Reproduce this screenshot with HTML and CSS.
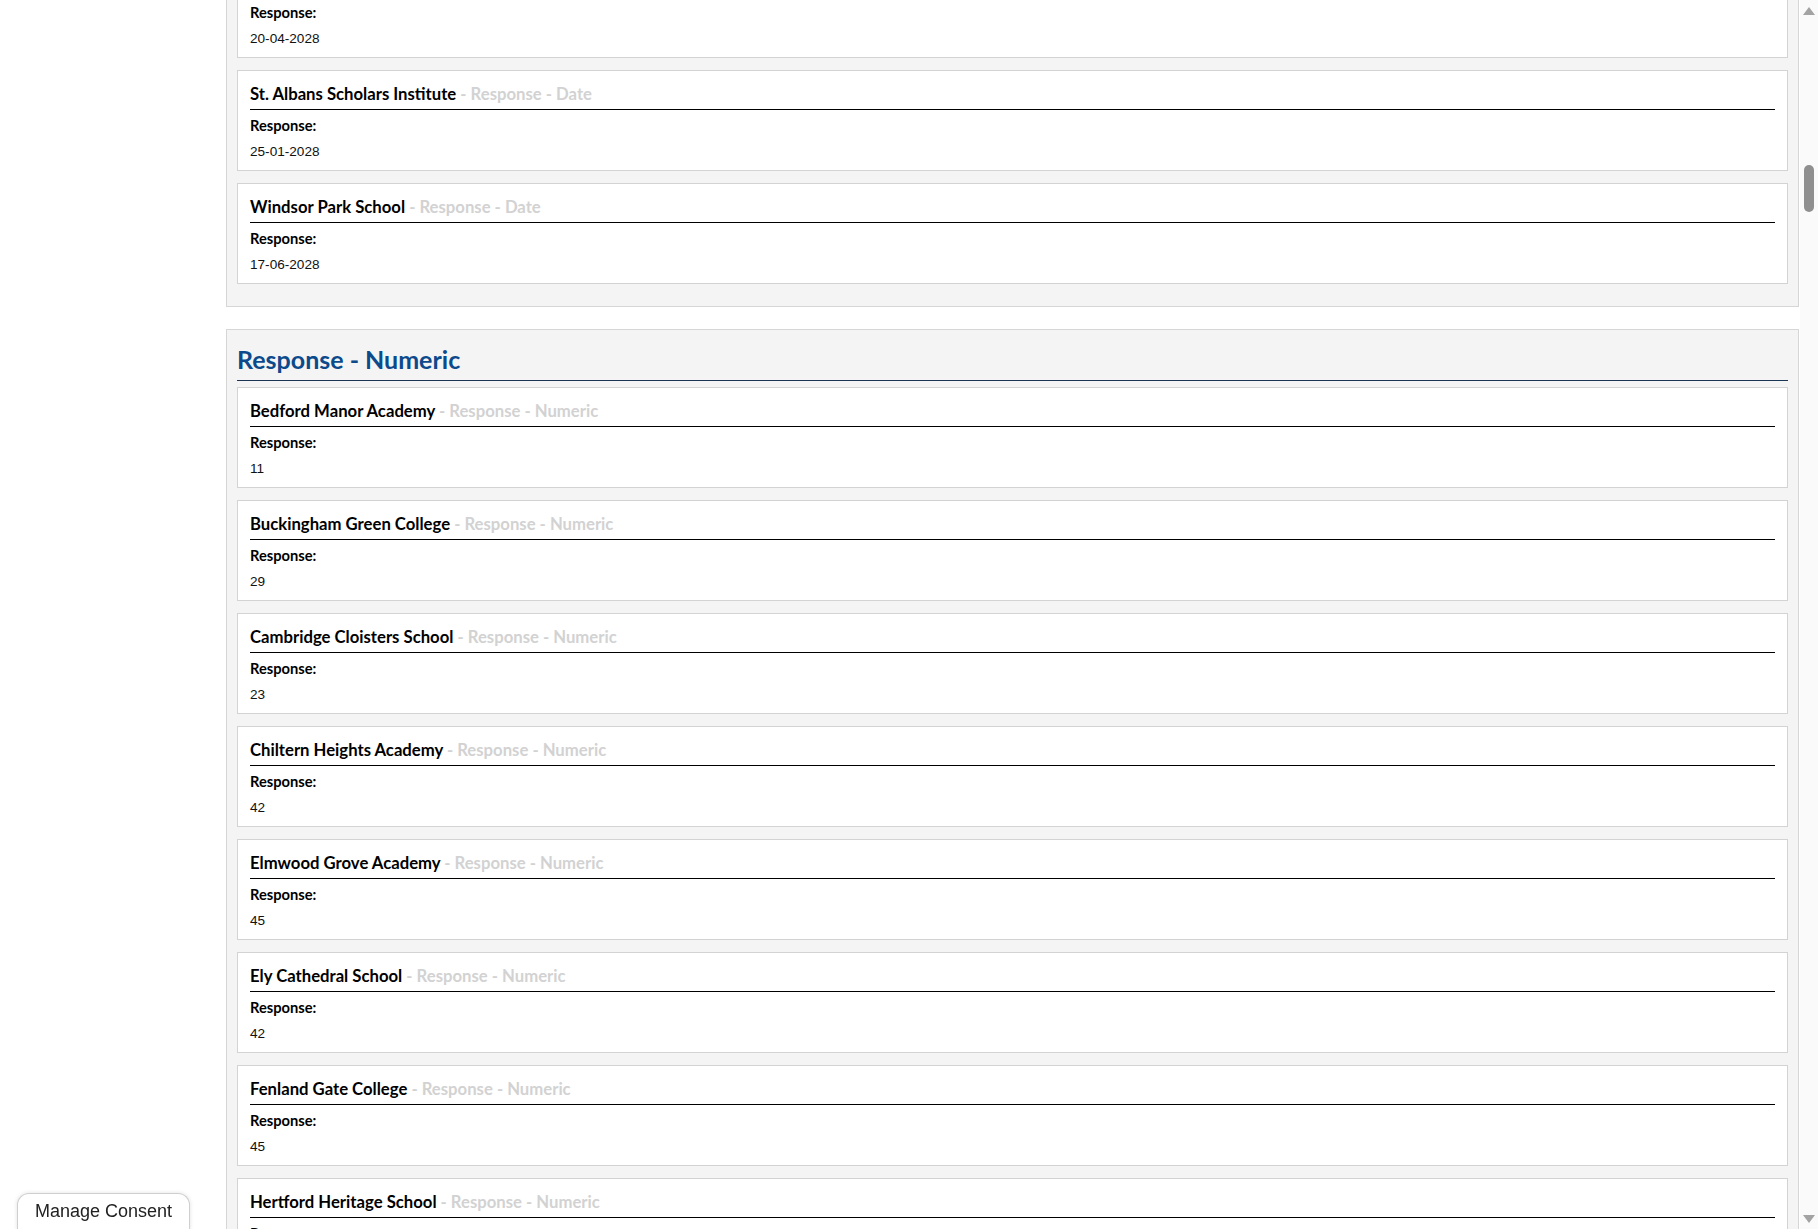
FILE: index.html
```html
<!DOCTYPE html>
<html lang="en">
<head>
<meta charset="utf-8">
<title>Responses</title>
<link rel="stylesheet" href="styles.css">
</head>
<body>
<div class="page">
  <main class="content">
    <section class="group">
      <div class="card">
        <div class="card-title">Richmond Hill College <span class="suffix">- Response - Date</span></div>
        <div class="label">Response:</div>
        <div class="value">20-04-2028</div>
      </div>
      <div class="card">
        <div class="card-title">St. Albans Scholars Institute <span class="suffix">- Response - Date</span></div>
        <div class="label">Response:</div>
        <div class="value">25-01-2028</div>
      </div>
      <div class="card">
        <div class="card-title">Windsor Park School <span class="suffix">- Response - Date</span></div>
        <div class="label">Response:</div>
        <div class="value">17-06-2028</div>
      </div>
    </section>

    <section class="group">
      <h2 class="group-title">Response - Numeric</h2>
      <div class="card">
        <div class="card-title">Bedford Manor Academy <span class="suffix">- Response - Numeric</span></div>
        <div class="label">Response:</div>
        <div class="value">11</div>
      </div>
      <div class="card">
        <div class="card-title">Buckingham Green College <span class="suffix">- Response - Numeric</span></div>
        <div class="label">Response:</div>
        <div class="value">29</div>
      </div>
      <div class="card">
        <div class="card-title">Cambridge Cloisters School <span class="suffix">- Response - Numeric</span></div>
        <div class="label">Response:</div>
        <div class="value">23</div>
      </div>
      <div class="card">
        <div class="card-title">Chiltern Heights Academy <span class="suffix">- Response - Numeric</span></div>
        <div class="label">Response:</div>
        <div class="value">42</div>
      </div>
      <div class="card">
        <div class="card-title">Elmwood Grove Academy <span class="suffix">- Response - Numeric</span></div>
        <div class="label">Response:</div>
        <div class="value">45</div>
      </div>
      <div class="card">
        <div class="card-title">Ely Cathedral School <span class="suffix">- Response - Numeric</span></div>
        <div class="label">Response:</div>
        <div class="value">42</div>
      </div>
      <div class="card">
        <div class="card-title">Fenland Gate College <span class="suffix">- Response - Numeric</span></div>
        <div class="label">Response:</div>
        <div class="value">45</div>
      </div>
      <div class="card">
        <div class="card-title">Hertford Heritage School <span class="suffix">- Response - Numeric</span></div>
        <div class="label">Response:</div>
        <div class="value">36</div>
      </div>
    </section>
  </main>
</div>

<div class="scrollbar" aria-hidden="true">
  <div class="sb-arrow sb-up"></div>
  <div class="sb-track"><div class="sb-thumb"></div></div>
  <div class="sb-arrow sb-down"></div>
</div>

<button class="consent" type="button">Manage Consent</button>
</body>
</html>
```
FILE: styles.css
```css
html, body {
  margin: 0;
  padding: 0;
  height: 100%;
  overflow: hidden;
  background: #ffffff;
}

body {
  font-family: "Liberation Sans", Arial, sans-serif;
  color: #000;
}

.page {
  display: flex;
  padding-left: 226px;
  padding-right: 19px;
  margin-top: -54px;
}

.content {
  flex: 1;
  display: flex;
  flex-direction: column;
  gap: 22px;
}

.group {
  background: #f4f4f4;
  border: 1px solid #d6d6d6;
  padding: 10px 10px 10px;
}

.group-title {
  margin: 0 0 6px;
  padding-top: 2px;
  padding-bottom: 4px;
  font-family: Lato, "Open Sans", sans-serif;
  font-weight: 700;
  font-size: 25px;
  line-height: 34px;
  color: #0c4a8c;
  border-bottom: 1px solid #1a3556;
}

.card {
  background: #ffffff;
  border: 1px solid #d3d3d3;
  padding: 12px 12px 10px;
  margin-bottom: 12px;
}

.card-title {
  font-family: Lato, "Open Sans", sans-serif;
  font-weight: 700;
  font-size: 16.7px;
  line-height: 22px;
  color: #000;
  padding-bottom: 4px;
  border-bottom: 1px solid #000;
}

.suffix {
  color: #d2d2d2;
}

.label {
  margin-top: 6px;
  font-family: Lato, "Open Sans", sans-serif;
  font-weight: 700;
  font-size: 14.7px;
  line-height: 18px;
  color: #000;
}

.value {
  margin-top: 10px;
  font-size: 13.6px;
  line-height: 16px;
  color: #111;
}

/* fake scrollbar */
.scrollbar {
  position: fixed;
  top: 0;
  right: 0;
  bottom: 0;
  width: 18px;
  background: #fafafa;
  display: flex;
  flex-direction: column;
  align-items: center;
}

.sb-arrow {
  width: 0;
  height: 0;
  border-left: 6px solid transparent;
  border-right: 6px solid transparent;
}

.sb-up {
  margin-top: 7px;
  border-bottom: 8px solid #a3a3a3;
}

.sb-down {
  margin-bottom: 6px;
  border-top: 8px solid #a3a3a3;
}

.sb-track {
  flex: 1;
  width: 100%;
  display: flex;
  justify-content: center;
}

.sb-thumb {
  margin-top: 150px;
  width: 10px;
  height: 47px;
  border-radius: 5px;
  background: #8f8f8f;
}

.consent {
  position: fixed;
  left: 17px;
  bottom: -1px;
  width: 173px;
  height: 37px;
  box-sizing: border-box;
  padding: 6px 0 8px;
  margin: 0;
  background: #fff;
  border: 1px solid #cfcfcf;
  border-bottom: none;
  border-radius: 12px 12px 0 0;
  box-shadow: 0 0 4px rgba(0, 0, 0, 0.12);
  font-family: "Liberation Sans", Arial, sans-serif;
  font-size: 18px;
  line-height: 22px;
  color: #222;
  text-align: center;
  display: block;
}
```
